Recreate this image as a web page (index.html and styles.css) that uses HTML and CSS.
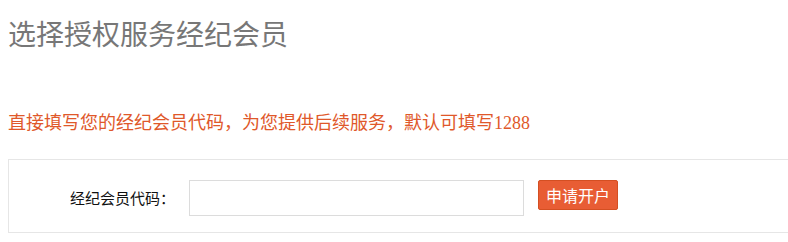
FILE: index.html
```html
<!DOCTYPE html>
<html lang="zh-CN">
<head>
<meta charset="utf-8">
<title>选择授权服务经纪会员</title>
<link rel="stylesheet" href="styles.css">
</head>
<body>
<h1 class="title">选择授权服务经纪会员</h1>
<p class="hint">直接填写您的经纪会员代码，为您提供后续服务，默认可填写1288</p>
<div class="panel">
  <label class="label" for="code">经纪会员代码：</label>
  <input class="code-input" id="code" type="text">
  <button class="btn" type="button">申请开户</button>
</div>
</body>
</html>
```

FILE: styles.css
```css
html {
  overflow: hidden;
}
body {
  margin: 8px 0 8px 8px;
  background: #fff;
  font-family: "Noto Sans CJK SC", sans-serif;
}
.title {
  margin: 8px 0 0;
  font-size: 28px;
  line-height: 34px;
  font-weight: normal;
  color: #777;
  font-family: "Noto Sans CJK SC", sans-serif;
}
.hint {
  margin: 61px 0 0;
  font-size: 18px;
  line-height: 24px;
  color: #e0582a;
  font-family: "Liberation Serif", "Noto Sans CJK SC", serif;
}
.panel {
  margin-top: 24px;
  height: 74px;
  box-sizing: border-box;
  border: 1px solid #e6e6e6;
  border-right: 0;
  display: flex;
  align-items: flex-start;
  padding-top: 20px;
}
.label {
  width: 166px;
  padding-right: 14px;
  text-align: right;
  font-size: 15px;
  line-height: 36px;
  color: #111;
}
.code-input {
  width: 335px;
  height: 36px;
  box-sizing: border-box;
  border: 1px solid #dcdcdc;
  margin: 0;
  padding: 0 6px;
  outline: none;
}
.btn {
  margin-left: 14px;
  width: 80px;
  height: 30px;
  box-sizing: border-box;
  background: #e85d34;
  border: 1px solid #d44f22;
  border-radius: 2px;
  color: #fff;
  font-size: 16px;
  line-height: 28px;
  padding: 0;
  font-family: "Noto Sans CJK SC", sans-serif;
}
```
